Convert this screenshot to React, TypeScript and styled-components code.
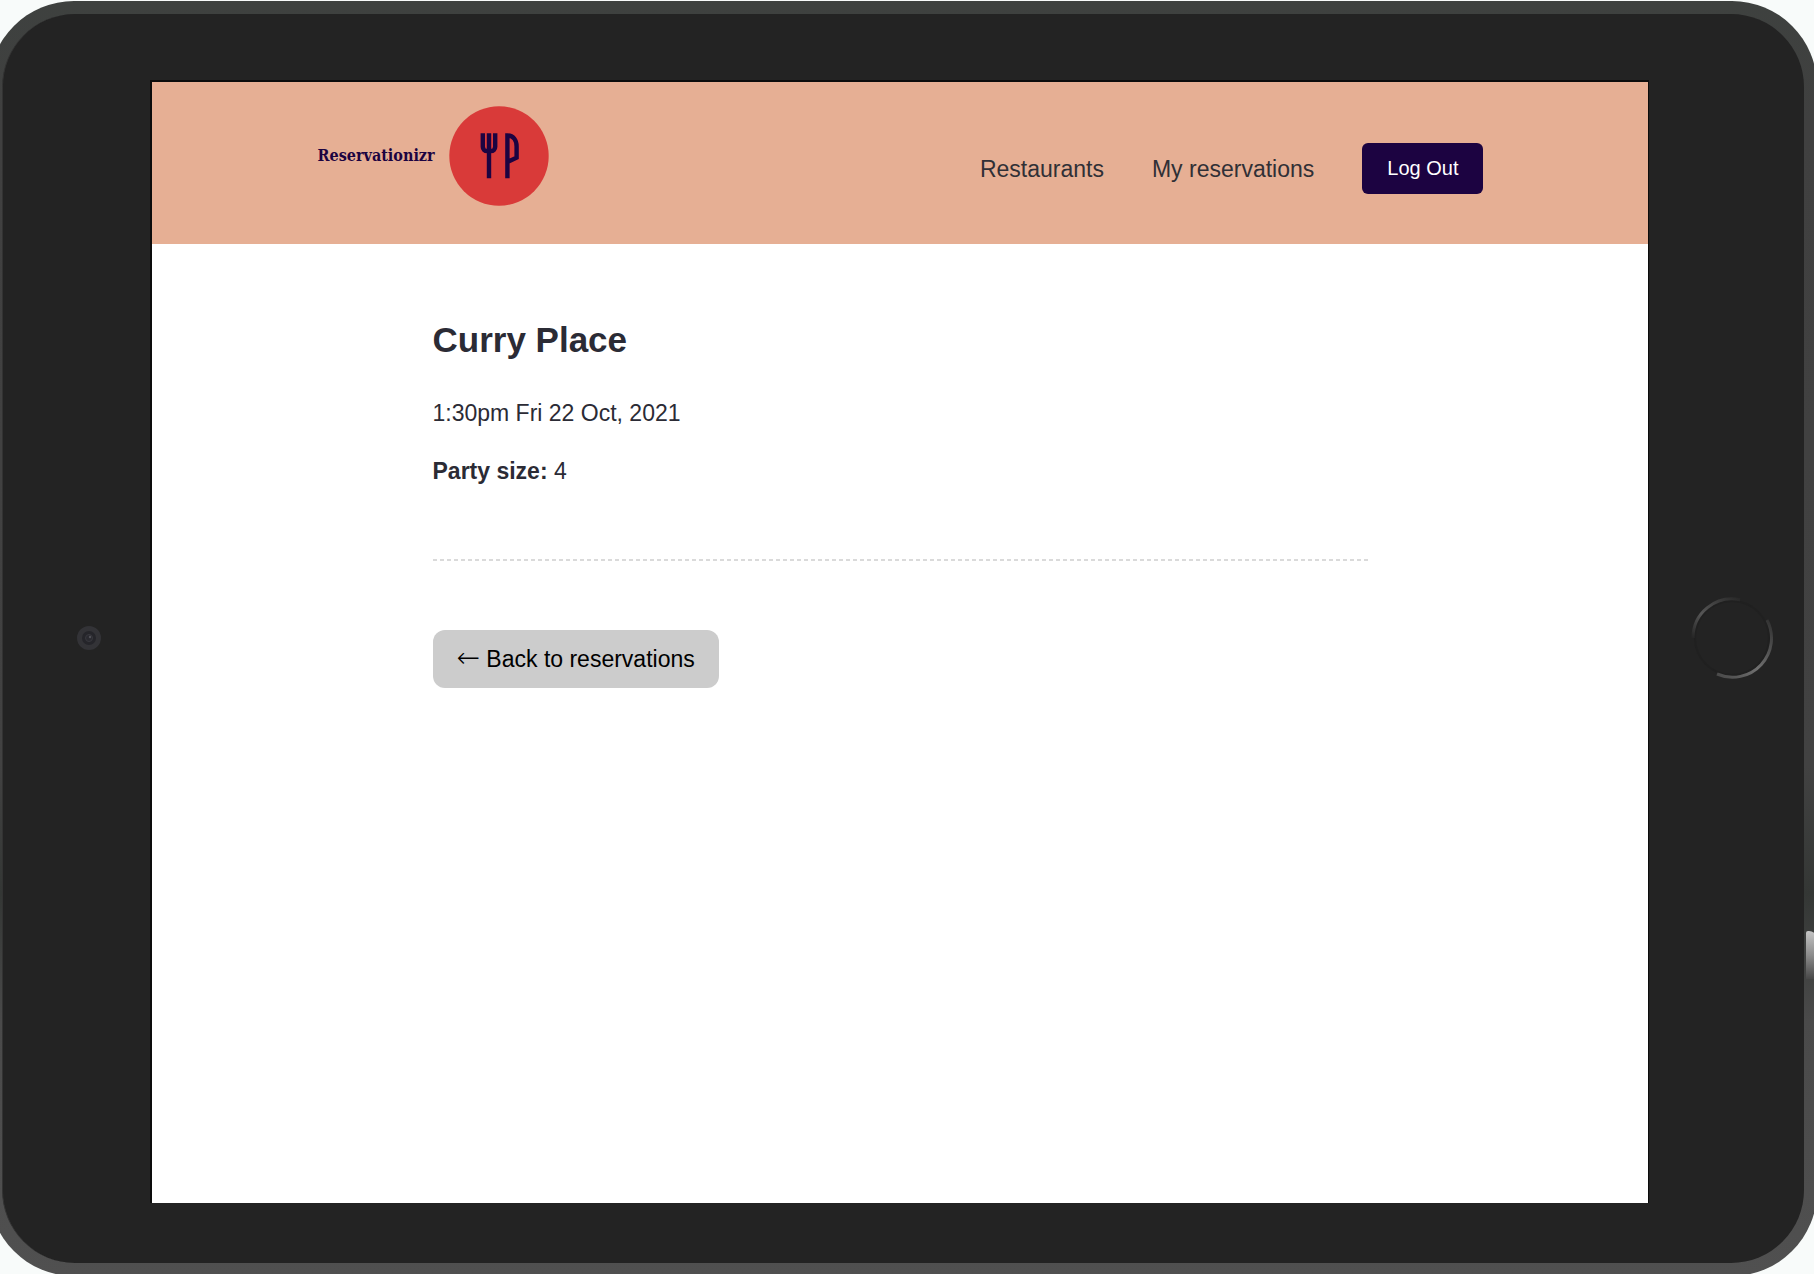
import React from "react";
import styled, { createGlobalStyle } from "styled-components";

const GlobalStyle = createGlobalStyle`
  * { box-sizing: border-box; }
  body {
    margin: 0;
    background: #f8fbfa;
    color: #2b2b35;
    font: 23px/34px "Liberation Sans", Arial, sans-serif;
  }
`;

const Stage = styled.div`
  height: 100vh;
  padding-top: 1px;
  overflow: hidden;
`;

const Rim = styled.div`
  position: relative;
  height: calc(100vh + 1px);
  margin: 0 -3px 0 -11px;
  padding: 13px;
  border-radius: 85px;
  background: linear-gradient(#3e413f, #404040 10%, #424242 60%, #343735 70%, #4a4a4a 80%, #505050);
`;

const PowerButton = styled.span`
  position: absolute;
  top: 930px;
  right: 0;
  width: 11px;
  height: 48px;
  border-radius: 2px 8px 0 0;
  background: linear-gradient(#c4c4c4, #8c8c8c 50%, #484848);
`;

const Glass = styled.div`
  display: flex;
  height: 100%;
  padding: 66px 0 60px;
  border-radius: 73px;
  border-left: 1px solid #333333;
  background: #232323;
`;

const Side = styled.div<{ $width: number; $inset: number }>`
  display: flex;
  flex: 0 0 ${(p) => p.$width}px;
  align-items: center;
  justify-content: center;
  padding: 0 0 8px ${(p) => p.$inset}px;
`;

const Screen = styled.div`
  flex: 1;
  border: solid #0c0c0c;
  border-width: 2px 1px 0 2px;
  background: #ffffff;
`;

const Header = styled.header`
  display: flex;
  align-items: flex-start;
  justify-content: space-between;
  padding: 24px 11% 38px;
  background: #e6af94;
`;

const Logo = styled.a`
  display: flex;
  align-items: center;
  gap: 14px;
  padding-left: 1px;
  color: #1c0341;
  font: bold 16px/20px "DejaVu Serif Condensed", "DejaVu Serif", serif;
  text-decoration: none;
`;

const Nav = styled.nav`
  display: flex;
  align-items: center;
  gap: 48px;
  padding-top: 37px;
`;

const NavLink = styled.a`
  color: #303036;
  text-decoration: none;
`;

const LogOut = styled.button`
  padding: 14px 25px;
  border: 0;
  border-radius: 6px;
  background: #1c0341;
  color: #ffffff;
  font: 20px/23px "Liberation Sans", Arial, sans-serif;
`;

const Main = styled.main`
  width: 62.5%;
  margin: 0 auto;
  padding-top: 76px;
`;

const Title = styled.h1`
  margin: 0 0 36px;
  font-size: 35px;
  line-height: 40px;
`;

const Detail = styled.p`
  margin: 0 0 24px;
`;

const Divider = styled.hr`
  height: 2px;
  margin: 71px 0 69px;
  border: 0;
  background: repeating-linear-gradient(90deg, #dadada 0 4px, #ffffff 4px 7px);
`;

const BackLink = styled.a`
  display: inline-block;
  padding: 12px 24px;
  border-radius: 12px;
  background: #cccccc;
  color: #000000;
  text-decoration: none;
`;

const Arrow = styled.span`
  font-family: "DejaVu Sans", sans-serif;
  font-size: 28px;
  font-weight: 200;
  line-height: 20px;
`;

const LogoMark = () => (
  <svg width="100" height="100" viewBox="0 0 100 100" aria-hidden="true">
    <circle cx="50" cy="50" r="49.7" fill="#d93a39" />
    <g fill="none" stroke="#1c0341" strokeWidth="4.4">
      <path d="M33.8 27.3v13.4c0 2.6 1.8 4.4 4.4 4.4h3.6c2.6 0 4.4-1.8 4.4-4.4V27.3M40 27.3v44.9" />
      <path d="M58.4 72.2V29.5c6 0 9.2 4.5 9.2 11v11.2l-9.2 4.4" />
    </g>
  </svg>
);

const Camera = () => (
  <svg width="26" height="26" viewBox="0 0 26 26" aria-hidden="true">
    <circle cx="13" cy="13" r="9.5" fill="#25252a" stroke="#333337" strokeWidth="5" />
    <circle cx="13" cy="13" r="3.5" fill="#2a2a30" stroke="#38383e" />
    <circle cx="14" cy="12" r="1.2" fill="#505058" />
  </svg>
);

const HomeButton = () => (
  <svg width="84" height="84" viewBox="0 0 84 84" fill="none" aria-hidden="true">
    <defs>
      <linearGradient id="upper" x1="0" y1="1" x2="1" y2="0">
        <stop offset="0" stopColor="#262626" />
        <stop offset="0.4" stopColor="#565656" />
        <stop offset="1" stopColor="#282828" />
      </linearGradient>
      <linearGradient id="lower" x1="1" y1="0" x2="0" y2="1">
        <stop offset="0" stopColor="#303030" />
        <stop offset="0.55" stopColor="#707070" />
        <stop offset="1" stopColor="#484848" />
      </linearGradient>
    </defs>
    <circle cx="42" cy="42" r="37" stroke="#202020" strokeWidth="2" />
    <path d="M3 42A39 39 0 0 1 50 3.8" stroke="url(#upper)" strokeWidth="3" />
    <path d="M77 24A39 39 0 0 1 27 78" stroke="url(#lower)" strokeWidth="3" />
  </svg>
);

export default function App() {
  return (
    <Stage>
      <GlobalStyle />
      <Rim>
        <PowerButton />
        <Glass>
          <Side $width={147} $inset={24}>
            <Camera />
          </Side>
          <Screen>
            <Header>
              <Logo href="#">
                <span>Reservationizr</span>
                <LogoMark />
              </Logo>
              <Nav>
                <NavLink href="#">Restaurants</NavLink>
                <NavLink href="#">My reservations</NavLink>
                <LogOut type="button">Log Out</LogOut>
              </Nav>
            </Header>
            <Main>
              <Title>Curry Place</Title>
              <Detail>1:30pm Fri 22 Oct, 2021</Detail>
              <Detail>
                <strong>Party size:</strong> 4
              </Detail>
              <Divider />
              <BackLink href="#">
                <Arrow>←</Arrow> Back to reservations
              </BackLink>
            </Main>
          </Screen>
          <Side $width={155} $inset={10}>
            <HomeButton />
          </Side>
        </Glass>
      </Rim>
    </Stage>
  );
}
